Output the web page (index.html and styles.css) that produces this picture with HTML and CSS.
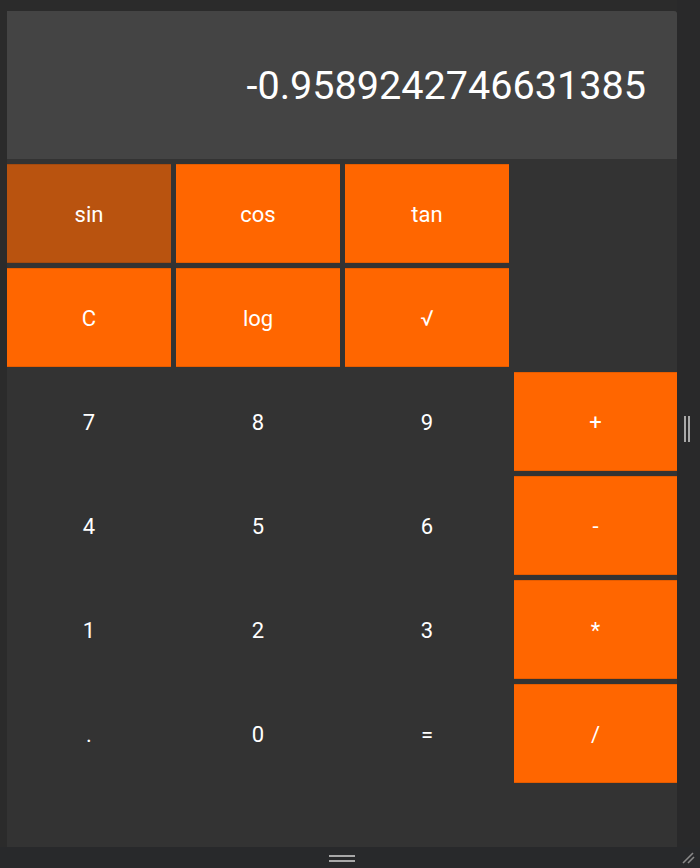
FILE: index.html
```html
<!DOCTYPE html>
<html>
<head>
<meta charset="utf-8">
<link rel="stylesheet" href="styles.css">
</head>
<body>
<div class="window">
  <div class="main">
    <div class="gutter-left"></div>
    <div class="calc">
      <div class="display">-0.9589242746631385</div>
      <div class="keys">
        <button class="key op hover">sin</button>
        <button class="key op">cos</button>
        <button class="key op">tan</button>
        <div class="blank"></div>
        <button class="key op">C</button>
        <button class="key op">log</button>
        <button class="key op">√</button>
        <div class="blank"></div>
        <button class="key">7</button>
        <button class="key">8</button>
        <button class="key">9</button>
        <button class="key op">+</button>
        <button class="key">4</button>
        <button class="key">5</button>
        <button class="key">6</button>
        <button class="key op">-</button>
        <button class="key">1</button>
        <button class="key">2</button>
        <button class="key">3</button>
        <button class="key op">*</button>
        <button class="key">.</button>
        <button class="key">0</button>
        <button class="key">=</button>
        <button class="key op">/</button>
      </div>
    </div>
    <div class="gutter-right">
      <div class="vhandle"><span></span><span></span></div>
    </div>
  </div>
  <div class="bottom-bar">
    <div class="hhandle"><span></span><span></span></div>
    <svg class="grip" width="16" height="16" viewBox="0 0 16 16">
      <line x1="3" y1="14" x2="13" y2="4" stroke="#8a8a8a" stroke-width="1.6"/>
      <line x1="8" y1="14" x2="14" y2="8" stroke="#8a8a8a" stroke-width="1.6"/>
    </svg>
  </div>
</div>
</body>
</html>
```
FILE: styles.css
```css
html, body {
  margin: 0;
  padding: 0;
  background: #2b2b2b;
}
body {
  width: 700px;
  height: 868px;
  overflow: hidden;
  font-family: Roboto, "Liberation Sans", sans-serif;
}
.window {
  display: flex;
  flex-direction: column;
  height: 868px;
}
.main {
  display: flex;
  flex: 1;
  min-height: 0;
}
.gutter-left {
  width: 7px;
  background: #2b2b2b;
}
.calc {
  width: 670px;
  margin-top: 11px;
  background: #333333;
  border-top-right-radius: 3px;
  display: flex;
  flex-direction: column;
}
.display {
  height: 148px;
  background: #444444;
  border-top-right-radius: 3px;
  color: #ffffff;
  font-size: 39.6px;
  display: flex;
  align-items: center;
  justify-content: flex-end;
  padding-right: 31px;
  box-sizing: border-box;
}
.keys {
  display: grid;
  grid-template-columns: 164px 164px 164px 163px;
  grid-auto-rows: 99px;
  gap: 5px;
  padding-top: 5px;
}
.key {
  border: none;
  margin: 0;
  padding: 2px 0 0 0;
  background: transparent;
  color: #ffffff;
  font-family: Roboto, "Liberation Sans", sans-serif;
  font-size: 22px;
}
.key.op {
  background: #ff6600;
  border-top: 1px solid #e55c00;
  border-bottom: 1px solid #e55c00;
}
.key.op.hover {
  background: #b9530f;
  border-color: #a54a0e;
}
.gutter-right {
  flex: 1;
  background: #29292a;
  display: flex;
  align-items: center;
  justify-content: center;
  padding-top: 11px;
}
.vhandle {
  display: flex;
  gap: 2px;
  height: 26px;
  margin-left: -3px;
}
.vhandle span {
  width: 2px;
  background: #a8a8a8;
}
.bottom-bar {
  height: 21px;
  background: #28292b;
  position: relative;
  display: flex;
  justify-content: flex-start;
  padding-left: 329px;
  padding-top: 8px;
  box-sizing: border-box;
}
.hhandle {
  display: flex;
  flex-direction: column;
  gap: 3px;
  width: 26px;
}
.hhandle span {
  height: 2px;
  background: #a8a8a8;
}
.grip {
  position: absolute;
  right: 4px;
  bottom: 3px;
}
```
